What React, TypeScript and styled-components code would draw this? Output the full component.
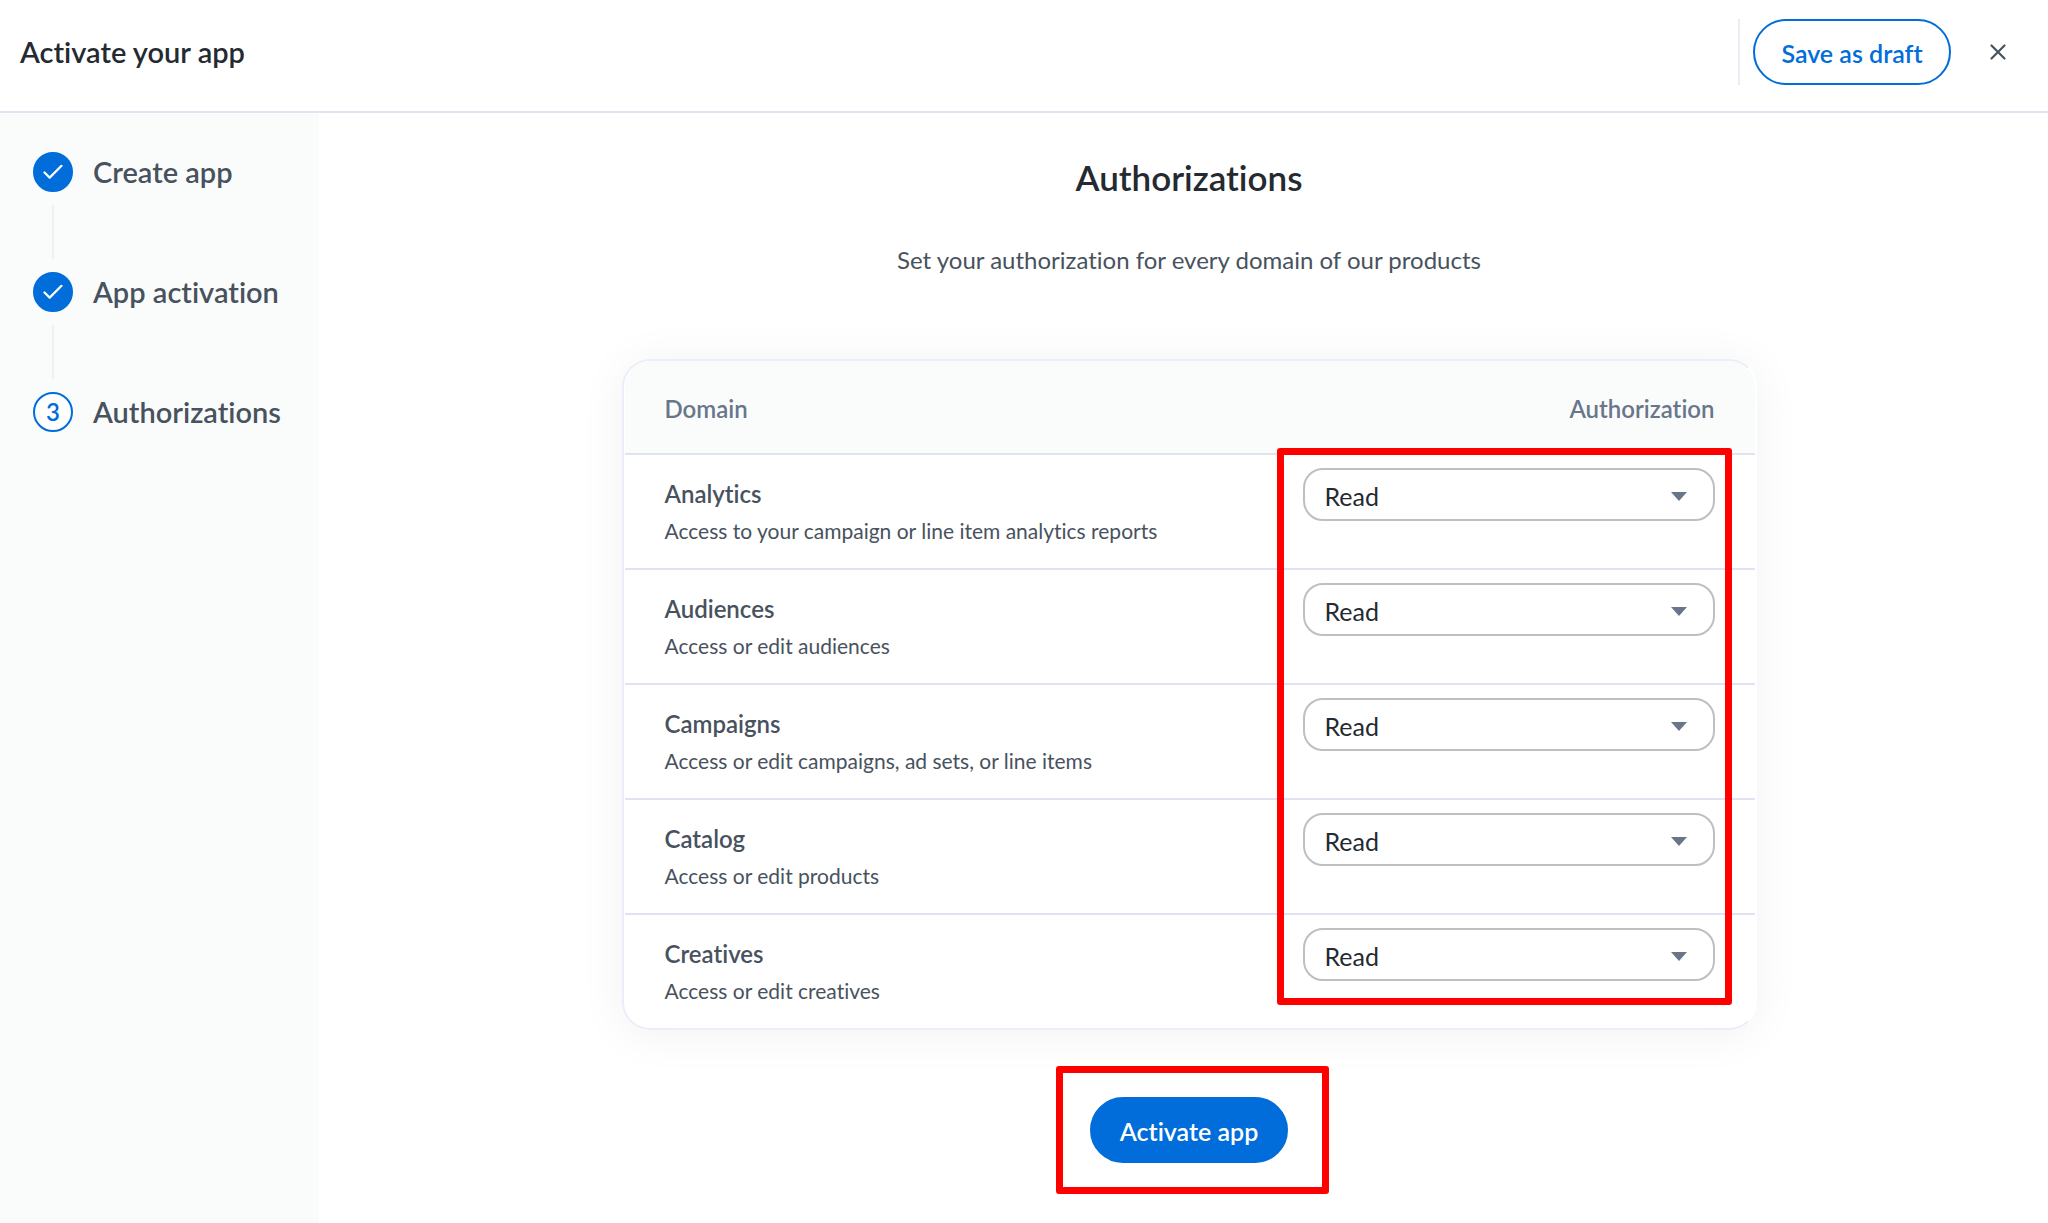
import React from "react";
import styled, { createGlobalStyle, css } from "styled-components";

const color = {
  ink: "#252a31",
  body: "#48525e",
  muted: "#69768a",
  blue: "#006ddb",
  line: "#dfe3f1",
  tint: "#fafcfb",
  mark: "#ff0000",
};

const GlobalStyle = createGlobalStyle`
  *, *::before, *::after { box-sizing: border-box; }
  body {
    margin: 0;
    background: #fff;
    color: ${color.body};
    font-family: Lato, "Liberation Sans", sans-serif;
    font-size: 24px;
    line-height: 32px;
    font-variant-ligatures: none;
  }
  h1, h2, p, ol { margin: 0; padding: 0; }
  button, select { font: inherit; font-variant-ligatures: inherit; }
`;

const Page = styled.div`
  display: flex;
  flex-direction: column;
  min-height: 100vh;
`;

const TopBar = styled.header`
  display: flex;
  align-items: center;
  justify-content: space-between;
  padding: 19px 28px 26px 20px;
  border-bottom: 2px solid #e2e2f0;
`;

const AppTitle = styled.h1`
  padding-bottom: 1px;
  font-size: 29px;
  font-weight: 600;
  color: ${color.ink};
`;

const Actions = styled.div`
  display: flex;
  align-items: center;
  padding-left: 13px;
  border-left: 2px solid #ececf5;
`;

const PillButton = styled.button<{ $solid?: boolean }>`
  height: 66px;
  min-width: 198px;
  padding: 2px 24px 0;
  border: 2px solid ${color.blue};
  border-radius: 33px;
  font-size: 25px;
  font-weight: 600;
  cursor: pointer;
  ${({ $solid }) =>
    $solid
      ? css`
          background: ${color.blue};
          color: #fff;
        `
      : css`
          background: #fff;
          color: ${color.blue};
        `}
`;

const CloseButton = styled.button`
  display: grid;
  place-items: center;
  width: 44px;
  height: 44px;
  margin-left: 25px;
  padding: 0;
  border: 0;
  background: none;
  cursor: pointer;
`;

const Columns = styled.div`
  display: grid;
  grid-template-columns: 319px 1fr;
  flex: 1;
`;

const Sidebar = styled.nav`
  padding: 39px 20px 39px 33px;
  background: ${color.tint};
`;

const StepList = styled.ol`
  list-style: none;
`;

const Step = styled.li`
  display: grid;
  grid-template-columns: 40px 1fr;
  column-gap: 20px;
  align-items: center;
`;

const StepBadge = styled.span<{ $done: boolean }>`
  display: grid;
  place-items: center;
  width: 40px;
  height: 40px;
  border: 2px solid ${color.blue};
  border-radius: 50%;
  background: ${({ $done }) => ($done ? color.blue : "#fff")};
  color: ${color.blue};
  font-weight: 600;
`;

const StepLabel = styled.span`
  padding-bottom: 1px;
  font-size: 29px;
  font-weight: 600;
  white-space: nowrap;
`;

const StepLink = styled.span`
  justify-self: center;
  width: 2px;
  height: 54px;
  margin: 13px 0;
  background: #eef0f1;
`;

const Main = styled.main`
  display: flex;
  flex-direction: column;
  align-items: center;
  padding: 38px 24px 27px 35px;
`;

const Heading = styled.h2`
  font-size: 35px;
  line-height: 52px;
  font-weight: 600;
  color: ${color.ink};
`;

const Intro = styled.p`
  margin-top: 41px;
`;

const Card = styled.section`
  position: relative;
  width: 100%;
  max-width: 1135px;
  margin-top: 83px;
  padding-left: 1px;
  border: 2px solid #ebeef8;
  border-right-color: #fff;
  border-radius: 28px;
  box-shadow: 0 4px 48px rgba(0, 0, 0, 0.06);
`;

const Table = styled.table`
  width: 100%;
  border-collapse: separate;
  border-spacing: 0;
`;

const HeadCell = styled.th<{ $end?: boolean }>`
  height: 92px;
  padding: 3px 40px 0;
  background: ${color.tint};
  color: ${color.muted};
  font-weight: 600;
  text-align: ${({ $end }) => ($end ? "right" : "left")};
  border-radius: ${({ $end }) => ($end ? "0 26px 0 0" : "26px 0 0 0")};
`;

const cell = css`
  height: 115px;
  border-top: 2px solid ${color.line};
  vertical-align: top;
  text-align: left;
  font-weight: 400;
`;

const DomainCell = styled.th`
  ${cell}
  padding: 23px 40px 0;
`;

const AccessCell = styled.td`
  ${cell}
  width: 492px;
  padding: 13px 40px 0;
`;

const DomainName = styled.label`
  display: block;
  font-weight: 600;
`;

const DomainNote = styled.span`
  display: block;
  margin-top: 5px;
  font-size: 21px;
`;

const SelectBox = styled.div`
  position: relative;
`;

const Select = styled.select`
  display: block;
  width: 100%;
  height: 53px;
  padding: 2px 48px 0 20px;
  border: 2px solid #bfbfbf;
  border-radius: 20px;
  background: #fff;
  color: ${color.ink};
  font-size: 25px;
  appearance: none;
`;

const Arrow = styled.svg`
  position: absolute;
  top: 24px;
  right: 28px;
  pointer-events: none;
`;

const frame = css`
  position: absolute;
  border: 7px solid ${color.mark};
  border-radius: 3px;
  pointer-events: none;
`;

const TableHighlight = styled.div`
  ${frame}
  top: 87px;
  right: 23px;
  bottom: 23px;
  width: 455px;
`;

const Submit = styled.div`
  position: relative;
  margin-top: 67px;
`;

const SubmitHighlight = styled.div`
  ${frame}
  inset: -31px -41px -31px -34px;
`;

const steps = [
  { label: "Create app", done: true },
  { label: "App activation", done: true },
  { label: "Authorizations", done: false },
];

const domains = [
  { name: "Analytics", note: "Access to your campaign or line item analytics reports" },
  { name: "Audiences", note: "Access or edit audiences" },
  { name: "Campaigns", note: "Access or edit campaigns, ad sets, or line items" },
  { name: "Catalog", note: "Access or edit products" },
  { name: "Creatives", note: "Access or edit creatives" },
];

function CheckIcon() {
  return (
    <svg width="20" height="16" viewBox="0 0 20 16" fill="none" aria-hidden="true">
      <path d="M1.5 8.5 6.7 13.6 18.5 1.8" stroke="#fff" strokeWidth="2.2" strokeLinecap="round" strokeLinejoin="round" />
    </svg>
  );
}

function CloseIcon() {
  return (
    <svg width="16" height="16" viewBox="0 0 16 16" fill="none" aria-hidden="true">
      <path d="M1.5 1.5 14.5 14.5M14.5 1.5 1.5 14.5" stroke={color.body} strokeWidth="2.2" strokeLinecap="round" />
    </svg>
  );
}

export default function App() {
  return (
    <>
      <GlobalStyle />
      <Page>
        <TopBar>
          <AppTitle>Activate your app</AppTitle>
          <Actions>
            <PillButton type="button">Save as draft</PillButton>
            <CloseButton type="button" aria-label="Close">
              <CloseIcon />
            </CloseButton>
          </Actions>
        </TopBar>
        <Columns>
          <Sidebar>
            <StepList>
              {steps.map((step, i) => (
                <Step key={step.label}>
                  <StepBadge $done={step.done}>{step.done ? <CheckIcon /> : i + 1}</StepBadge>
                  <StepLabel>{step.label}</StepLabel>
                  {i < steps.length - 1 && <StepLink />}
                </Step>
              ))}
            </StepList>
          </Sidebar>
          <Main>
            <Heading>Authorizations</Heading>
            <Intro>Set your authorization for every domain of our products</Intro>
            <Card>
              <Table>
                <thead>
                  <tr>
                    <HeadCell scope="col">Domain</HeadCell>
                    <HeadCell scope="col" $end>
                      Authorization
                    </HeadCell>
                  </tr>
                </thead>
                <tbody>
                  {domains.map(({ name, note }) => (
                    <tr key={name}>
                      <DomainCell scope="row">
                        <DomainName htmlFor={name}>{name}</DomainName>
                        <DomainNote>{note}</DomainNote>
                      </DomainCell>
                      <AccessCell>
                        <SelectBox>
                          <Select id={name} defaultValue="Read">
                            <option>Read</option>
                          </Select>
                          <Arrow width="16" height="9" viewBox="0 0 16 9" aria-hidden="true">
                            <path d="M0 0H16L8 9Z" fill={color.muted} />
                          </Arrow>
                        </SelectBox>
                      </AccessCell>
                    </tr>
                  ))}
                </tbody>
              </Table>
              <TableHighlight />
            </Card>
            <Submit>
              <PillButton type="submit" $solid>
                Activate app
              </PillButton>
              <SubmitHighlight />
            </Submit>
          </Main>
        </Columns>
      </Page>
    </>
  );
}
